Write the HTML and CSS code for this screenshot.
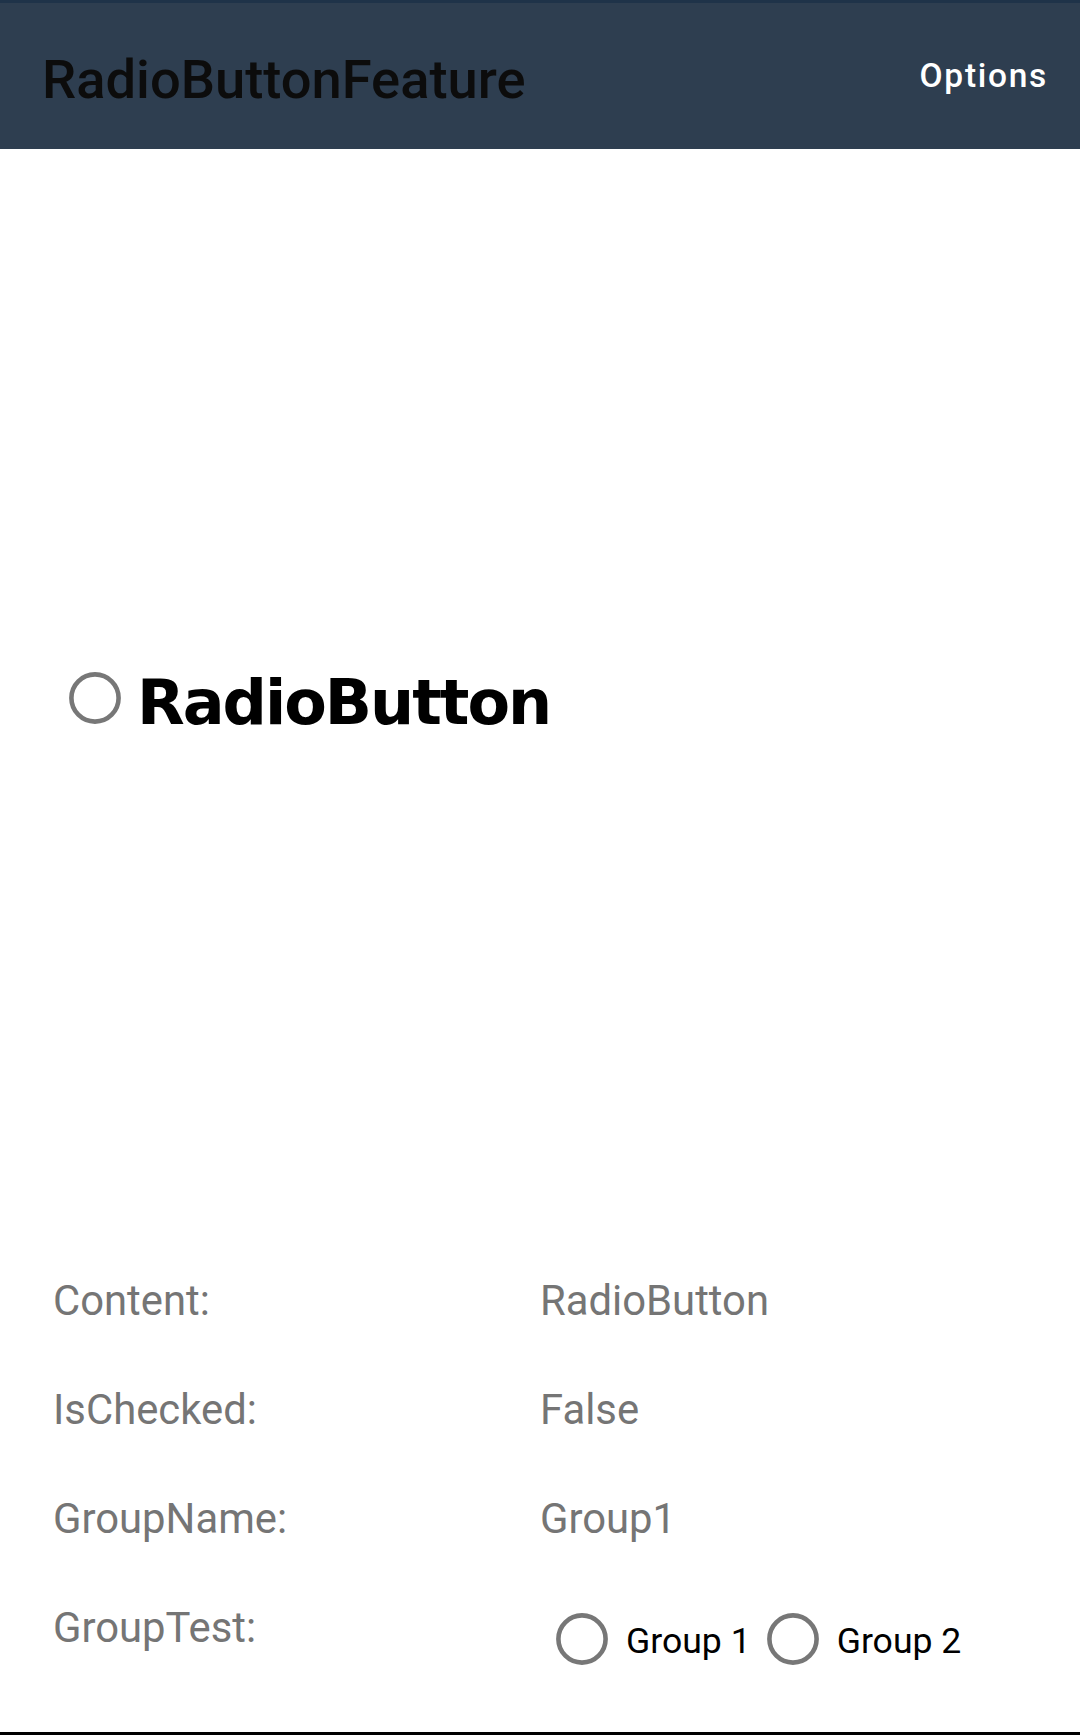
FILE: index.html
```html
<!DOCTYPE html>
<html lang="en">
<head>
<meta charset="utf-8">
<title>RadioButtonFeature</title>
<link rel="stylesheet" href="styles.css">
</head>
<body>
<div class="page">
  <header class="toolbar">
    <div class="title">RadioButtonFeature</div>
    <div class="options">Options</div>
  </header>
  <main class="content">
    <section class="demo">
      <div class="radio big">
        <svg class="ring" width="52" height="52" viewBox="0 0 52 52"><circle cx="26" cy="26" r="23.6" fill="none" stroke="#777777" stroke-width="4.6"/></svg>
        <span class="big-label">RadioButton</span>
      </div>
    </section>
    <section class="props">
      <div class="cell label">Content:</div>
      <div class="cell value">RadioButton</div>
      <div class="cell label">IsChecked:</div>
      <div class="cell value">False</div>
      <div class="cell label">GroupName:</div>
      <div class="cell value">Group1</div>
      <div class="cell label">GroupTest:</div>
      <div class="cell groups">
        <div class="radio small">
          <svg class="ring" width="52" height="52" viewBox="0 0 52 52"><circle cx="26" cy="26" r="23.6" fill="none" stroke="#777777" stroke-width="4.6"/></svg>
          <span class="small-label">Group 1</span>
        </div>
        <div class="radio small">
          <svg class="ring" width="52" height="52" viewBox="0 0 52 52"><circle cx="26" cy="26" r="23.6" fill="none" stroke="#777777" stroke-width="4.6"/></svg>
          <span class="small-label">Group 2</span>
        </div>
      </div>
    </section>
  </main>
  <div class="bottom-line"></div>
</div>
</body>
</html>
```
FILE: styles.css
```css
html, body {
  margin: 0;
  padding: 0;
  background: #ffffff;
}
body {
  font-family: Roboto, "Liberation Sans", sans-serif;
}
.page {
  width: 1080px;
  height: 1735px;
  display: flex;
  flex-direction: column;
  overflow: hidden;
}
.toolbar {
  box-sizing: border-box;
  height: 149px;
  border-top: 3px solid #1f3349;
  background: #2e3e50;
  display: flex;
  justify-content: space-between;
  align-items: flex-start;
  padding: 0 32px 0 42px;
  flex: none;
}
.title {
  margin-top: 49.5px;
  font-size: 54.3px;
  line-height: 54px;
  color: #0c0c0c;
  font-weight: 500;
}
.options {
  margin-top: 56px;
  font-size: 33.5px;
  line-height: 33px;
  font-weight: 500;
  letter-spacing: 1.7px;
  color: #ffffff;
}
.content {
  flex: 1;
  display: flex;
  flex-direction: column;
}
.demo {
  height: 1098px;
  display: flex;
  align-items: center;
  padding-left: 69px;
}
.radio {
  display: flex;
  align-items: center;
}
.ring {
  display: block;
  flex: none;
}
.big .ring {
  margin-right: 16px;
}
.big-label {
  font-family: "DejaVu Sans", sans-serif;
  font-weight: 700;
  font-size: 62px;
  line-height: 62px;
  letter-spacing: -2px;
  color: #000000;
  margin-top: 10px;
}
.props {
  display: grid;
  grid-template-columns: 487px 1fr;
  grid-auto-rows: 109.3px;
  padding-left: 53px;
}
.cell {
  font-size: 41.8px;
  line-height: 41px;
  padding-top: 32.5px;
  color: #757575;
}
.value {
  padding-left: 0;
}
.groups {
  padding-top: 38.5px;
  padding-left: 16px;
  display: flex;
  align-items: flex-start;
  gap: 16px;
}
.small .ring {
  margin-right: 18px;
}
.small-label {
  font-size: 35.6px;
  line-height: 35px;
  color: #000000;
  margin-top: 5px;
}
.bottom-line {
  height: 3px;
  background: #000000;
  flex: none;
}
```
